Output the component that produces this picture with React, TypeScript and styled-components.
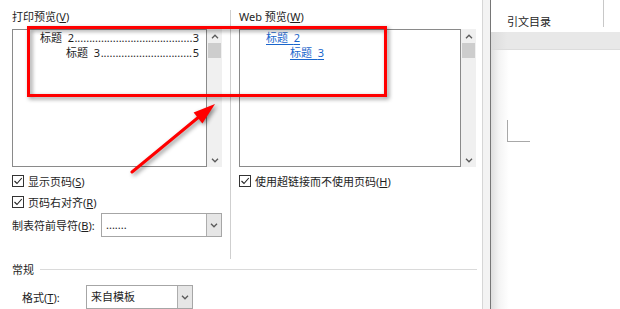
import React from 'react';
import styled, { createGlobalStyle } from 'styled-components';

const Global = createGlobalStyle`
  html, body { margin: 0; padding: 0; background: #fff; }
  body {
    font-family: "Noto Sans", "Noto Sans CJK SC", sans-serif;
    font-size: 11px;
    color: #1e1e1e;
  }
  * { box-sizing: border-box; }
`;

const Page = styled.div`
  position: relative;
  width: 620px;
  height: 309px;
  overflow: hidden;
  display: flex;
`;

const Dialog = styled.div`
  width: 482px;
  flex: none;
  display: flex;
  flex-direction: column;
  background: #fff;
`;

const Top = styled.div`
  display: flex;
  height: 268px;
  padding: 10px 0 0 12px;
`;

const Column = styled.div<{ $w: number }>`
  width: ${(p) => p.$w}px;
  flex: none;
  display: flex;
  flex-direction: column;
`;

const Label = styled.div`
  height: 14px;
  line-height: 14px;
  white-space: nowrap;
`;

const VSep = styled.div`
  width: 1px;
  flex: none;
  background: #cfcfcf;
  margin: 0 8px;
`;

const ListRow = styled.div`
  display: flex;
  height: 138px;
  margin-top: 5px;
`;

const ListBox = styled.div`
  flex: 1;
  border: 1px solid #8a8a8a;
  background: #fff;
  overflow: hidden;
`;

const Scrollbar = styled.div`
  width: 15px;
  flex: none;
  background: #f0f0f0;
  display: flex;
  flex-direction: column;
  align-items: center;
`;

const ArrowCell = styled.div`
  height: 14px;
  width: 100%;
  display: flex;
  align-items: center;
  justify-content: center;
`;

const Thumb = styled.div`
  width: 13px;
  height: 15px;
  background: #cdcdcd;
`;

const Track = styled.div`
  flex: 1;
`;

const TocRow = styled.div<{ $indent: number }>`
  display: flex;
  justify-content: space-between;
  height: 15px;
  line-height: 15px;
  padding: 0 7px 0 ${(p) => p.$indent}px;
  white-space: nowrap;
`;

const Dots = styled.span`
  flex: none;
`;

const LinkRow = styled.div<{ $indent: number }>`
  height: 15px;
  line-height: 15px;
  padding-left: ${(p) => p.$indent}px;
  white-space: nowrap;
`;

const Link = styled.span`
  color: #1a66cc;
  text-decoration: underline;
  text-underline-offset: 2px;
`;

const CheckRow = styled.div`
  display: flex;
  align-items: center;
  gap: 4px;
  height: 14px;
  margin-top: 7px;
  white-space: nowrap;
`;

const Box = styled.span`
  width: 12px;
  height: 12px;
  flex: none;
  border: 1px solid #333;
  background: #fff;
  display: flex;
  align-items: center;
  justify-content: center;
`;

const ComboRow = styled.div<{ $labelW: number; $pad?: number; $top?: number }>`
  display: flex;
  align-items: center;
  height: 24px;
  margin-top: ${(p) => p.$top ?? 4}px;
  padding-left: ${(p) => p.$pad ?? 0}px;
  white-space: nowrap;
  & > span:first-child {
    width: ${(p) => p.$labelW}px;
    flex: none;
  }
`;

const Combo = styled.div<{ $w: number }>`
  width: ${(p) => p.$w}px;
  height: 24px;
  display: flex;
  border: 1px solid #a6a6a6;
  background: #fff;
`;

const ComboValue = styled.div`
  flex: 1;
  padding-left: 4px;
  line-height: 22px;
  overflow: hidden;
`;

const ComboButton = styled.div`
  width: 15px;
  flex: none;
  background: #e6e6e6;
  border-left: 1px solid #adadad;
  display: flex;
  align-items: center;
  justify-content: center;
`;

const Group = styled.div`
  display: flex;
  flex-direction: column;
  padding: 0 5px 0 12px;
`;

const GroupTitle = styled.div`
  display: flex;
  align-items: center;
  gap: 6px;
  height: 20px;
  &::after {
    content: "";
    flex: 1;
    height: 1px;
    background: #dadada;
  }
`;

const Frame = styled.div`
  width: 9px;
  flex: none;
  background: #f3f3f3;
  border-left: 1px solid #d6d6d6;
  border-right: 1px solid #767676;
`;

const Doc = styled.div`
  flex: 1;
  display: flex;
  flex-direction: column;
`;

const DocHeader = styled.div`
  height: 32px;
  display: flex;
  align-items: flex-start;
  padding-left: 16px;
`;

const Tab = styled.div`
  margin-top: 15px;
  line-height: 14px;
  width: 96px;
  white-space: nowrap;
`;

const TabSep = styled.div`
  width: 1px;
  height: 27px;
  background: #c8c8c8;
`;

const Band = styled.div`
  height: 18px;
  background: linear-gradient(to right, #dcdcdc 0, #e8e8e8 16px, #e8e8e8 100%);
  border-bottom: 1px solid #dcdcdc;
`;

const DocBody = styled.div`
  flex: 1;
  background: linear-gradient(to right, #dedede 0, #f4f4f4 8px, #fff 18px);
  padding: 70px 0 0 16px;
`;

const CornerMark = styled.div`
  width: 23px;
  height: 22px;
  border-left: 1px solid #a8a8a8;
  border-bottom: 1px solid #a8a8a8;
`;

const Overlay = styled.svg`
  position: absolute;
  left: 0;
  top: 0;
  pointer-events: none;
  filter: drop-shadow(2px 2px 2px rgba(0, 0, 0, 0.45));
`;

const Chevron = ({ up }: { up?: boolean }) => (
  <svg width="8" height="5" viewBox="0 0 8 5">
    <path
      d={up ? 'M1 4.2 L4 1.2 L7 4.2' : 'M1 0.8 L4 3.8 L7 0.8'}
      fill="none"
      stroke="#5a5a5a"
      strokeWidth="1.3"
    />
  </svg>
);

const Check = () => (
  <svg width="10" height="10" viewBox="0 0 10 10">
    <path d="M1.5 5 L4 7.5 L8.8 2" fill="none" stroke="#222" strokeWidth="1.1" />
  </svg>
);

const ScrollBar = () => (
  <Scrollbar>
    <ArrowCell>
      <Chevron up />
    </ArrowCell>
    <Thumb />
    <Track />
    <ArrowCell>
      <Chevron />
    </ArrowCell>
  </Scrollbar>
);

const SP = '\u00a0\u00a0';

export default function App() {
  return (
    <Page>
      <Global />
      <Dialog>
        <Top>
          <Column $w={210}>
            <Label>打印预览(<u>V</u>)</Label>
            <ListRow>
              <ListBox>
                <TocRow $indent={27}>
                  <span>标题{SP}2</span>
                  <Dots>{'.'.repeat(40)}</Dots>
                  <span>3</span>
                </TocRow>
                <TocRow $indent={53}>
                  <span>标题{SP}3</span>
                  <Dots>{'.'.repeat(31)}</Dots>
                  <span>5</span>
                </TocRow>
              </ListBox>
              <ScrollBar />
            </ListRow>
            <CheckRow>
              <Box><Check /></Box>
              <span>显示页码(<u>S</u>)</span>
            </CheckRow>
            <CheckRow>
              <Box><Check /></Box>
              <span>页码右对齐(<u>R</u>)</span>
            </CheckRow>
            <ComboRow $labelW={89}>
              <span>制表符前导符(<u>B</u>):</span>
              <Combo $w={121}>
                <ComboValue>.......</ComboValue>
                <ComboButton><Chevron /></ComboButton>
              </Combo>
            </ComboRow>
          </Column>
          <VSep />
          <Column $w={237}>
            <Label>Web 预览(<u>W</u>)</Label>
            <ListRow>
              <ListBox>
                <LinkRow $indent={26}><Link>标题{SP}2</Link></LinkRow>
                <LinkRow $indent={50}><Link>标题{SP}3</Link></LinkRow>
              </ListBox>
              <ScrollBar />
            </ListRow>
            <CheckRow>
              <Box><Check /></Box>
              <span>使用超链接而不使用页码(<u>H</u>)</span>
            </CheckRow>
          </Column>
        </Top>
        <Group>
          <GroupTitle>常规</GroupTitle>
          <ComboRow $labelW={64} $pad={10} $top={6}>
            <span>格式(<u>T</u>):</span>
            <Combo $w={107}>
              <ComboValue>来自模板</ComboValue>
              <ComboButton><Chevron /></ComboButton>
            </Combo>
          </ComboRow>
        </Group>
      </Dialog>
      <Frame />
      <Doc>
        <DocHeader>
          <Tab>引文目录</Tab>
          <TabSep />
        </DocHeader>
        <Band />
        <DocBody>
          <CornerMark />
        </DocBody>
      </Doc>
      <Overlay width="620" height="309" viewBox="0 0 620 309">
        <rect x="28.5" y="27.5" width="357" height="68" fill="none" stroke="#ff0000" strokeWidth="3" />
        <line x1="132" y1="172" x2="200" y2="116" stroke="#ff0000" strokeWidth="3" strokeLinecap="round" />
        <polygon points="215,104 202.4,123.4 193.6,112.6" fill="#ff0000" />
      </Overlay>
    </Page>
  );
}
